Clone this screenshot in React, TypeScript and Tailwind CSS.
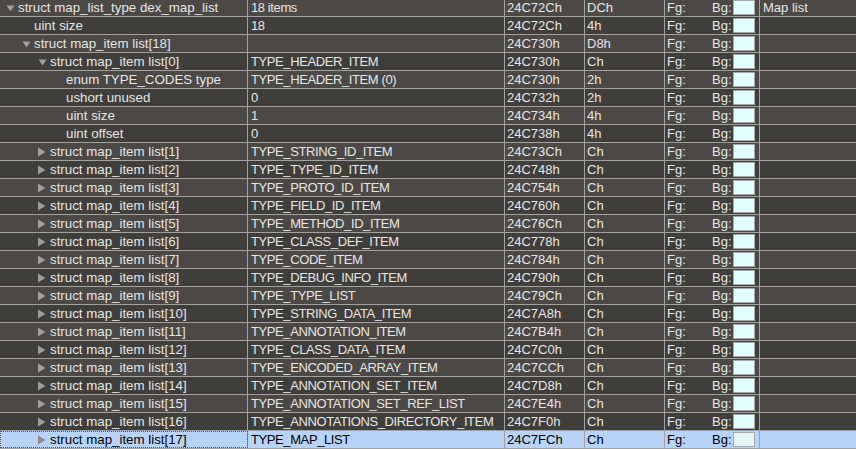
type Row = {
  level: number;
  arrow: "down" | "right" | null;
  name: string;
  value: string;
  start: string;
  size: string;
  comment?: string;
};

const types = [
  "TYPE_STRING_ID_ITEM",
  "TYPE_TYPE_ID_ITEM",
  "TYPE_PROTO_ID_ITEM",
  "TYPE_FIELD_ID_ITEM",
  "TYPE_METHOD_ID_ITEM",
  "TYPE_CLASS_DEF_ITEM",
  "TYPE_CODE_ITEM",
  "TYPE_DEBUG_INFO_ITEM",
  "TYPE_TYPE_LIST",
  "TYPE_STRING_DATA_ITEM",
  "TYPE_ANNOTATION_ITEM",
  "TYPE_CLASS_DATA_ITEM",
  "TYPE_ENCODED_ARRAY_ITEM",
  "TYPE_ANNOTATION_SET_ITEM",
  "TYPE_ANNOTATION_SET_REF_LIST",
  "TYPE_ANNOTATIONS_DIRECTORY_ITEM",
  "TYPE_MAP_LIST",
];

const rows: Row[] = [
  { level: 0, arrow: "down", name: "struct map_list_type dex_map_list", value: "18 items", start: "24C72Ch", size: "DCh", comment: "Map list" },
  { level: 1, arrow: null, name: "uint size", value: "18", start: "24C72Ch", size: "4h" },
  { level: 1, arrow: "down", name: "struct map_item list[18]", value: "", start: "24C730h", size: "D8h" },
  { level: 2, arrow: "down", name: "struct map_item list[0]", value: "TYPE_HEADER_ITEM", start: "24C730h", size: "Ch" },
  { level: 3, arrow: null, name: "enum TYPE_CODES type", value: "TYPE_HEADER_ITEM (0)", start: "24C730h", size: "2h" },
  { level: 3, arrow: null, name: "ushort unused", value: "0", start: "24C732h", size: "2h" },
  { level: 3, arrow: null, name: "uint size", value: "1", start: "24C734h", size: "4h" },
  { level: 3, arrow: null, name: "uint offset", value: "0", start: "24C738h", size: "4h" },
  ...types.map((t, i) => ({
    level: 2,
    arrow: "right" as const,
    name: `struct map_item list[${i + 1}]`,
    value: t,
    start: (0x24c73c + i * 12).toString(16).toUpperCase() + "h",
    size: "Ch",
  })),
];

const Arrow = ({ dir, selected }: { dir: "down" | "right"; selected: boolean }) => (
  <svg width="10" height="10" viewBox="0 0 10 10" className="shrink-0">
    {dir === "down" ? (
      <path d="M0.5 2.5 L8.5 2.5 L4.5 8.5 Z" fill={selected ? "#8c8c8c" : "#a19f9c"} />
    ) : (
      <path d="M0 0.5 L7.5 5 L0 9.5 Z" fill={selected ? "#8c8c8c" : "#a19f9c"} />
    )}
  </svg>
);

export default function App() {
  return (
    <div
      className="w-[856px] h-[449px] overflow-hidden bg-[#403e3b] text-[13px] text-[#e6e6e6]"
      style={{ fontFamily: '"Liberation Sans", Arial, sans-serif' }}
    >
      <div className="-mt-px">
        {rows.map((r, i) => {
          const sel = i === rows.length - 1;
          const bg = sel ? "bg-[#b7d4f8] text-black" : i % 2 === 0 ? "bg-[#4b4845]" : "bg-[#403e3b]";
          return (
            <div key={i} className={`flex h-[18px] leading-[17px] border-b border-[#a3a19f] ${bg}`}>
              <div
                className={`w-[248px] shrink-0 flex items-center border-r border-[#a3a19f] whitespace-nowrap text-[13.3px] ${
                  sel ? "outline outline-1 outline-dotted outline-[#555] -outline-offset-1" : ""
                }`}
                style={{ paddingLeft: 6 + r.level * 16 }}
              >
                <span className="w-[12px] shrink-0 flex items-center">
                  {r.arrow && <Arrow dir={r.arrow} selected={sel} />}
                </span>
                <span>{r.name}</span>
              </div>
              <div className="w-[257px] shrink-0 pl-[3px] border-r border-[#a3a19f] whitespace-nowrap overflow-hidden tracking-[-0.4px]">
                {r.value}
              </div>
              <div className="w-[80px] shrink-0 pl-[2px] border-r border-[#a3a19f]">{r.start}</div>
              <div className="w-[80px] shrink-0 pl-[2px] border-r border-[#a3a19f]">{r.size}</div>
              <div className="w-[95px] shrink-0 flex items-center pl-[2px] border-r border-[#a3a19f]">
                <span className="w-[45px]">Fg:</span>
                <span className="w-[20px]">Bg:</span>
                <span
                  className={`ml-auto mr-[4px] w-[22px] h-[15px] border border-[#a9a9a9] ${
                    sel ? "bg-[#e3f5f5]" : "bg-[#e0ffff]"
                  }`}
                />
              </div>
              <div className="flex-1 pl-[3px] whitespace-nowrap">{r.comment ?? ""}</div>
            </div>
          );
        })}
      </div>
    </div>
  );
}
